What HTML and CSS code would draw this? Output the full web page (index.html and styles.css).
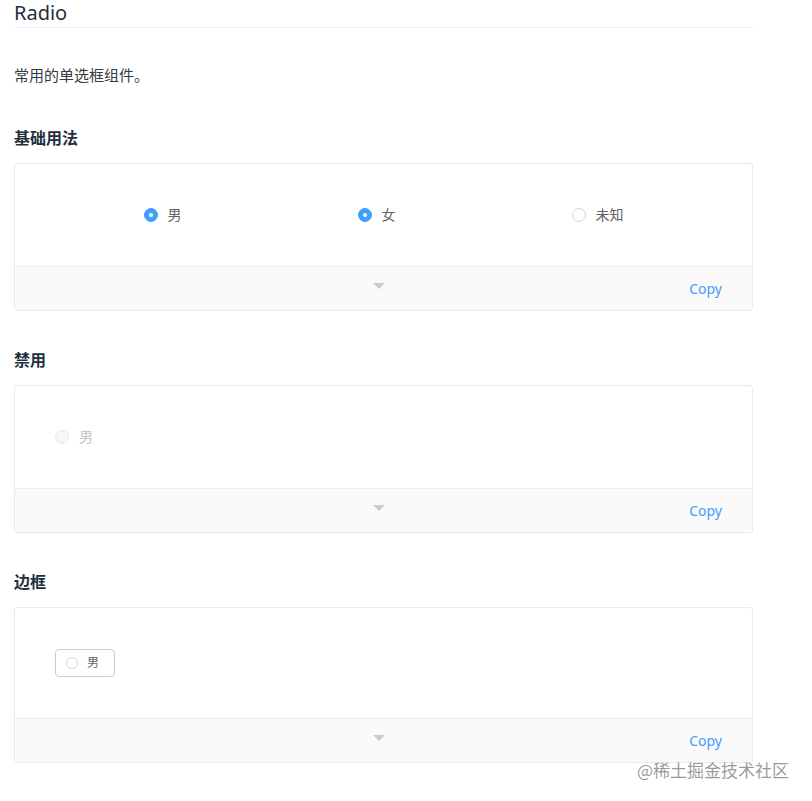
FILE: index.html
```html
<!DOCTYPE html>
<html lang="zh">
<head>
<meta charset="utf-8">
<title>Radio</title>
<link rel="stylesheet" href="styles.css">
</head>
<body>
<div class="page">
  <h2 class="title">Radio</h2>
  <p class="desc">常用的单选框组件。</p>

  <h3 class="section">基础用法</h3>
  <div class="demo">
    <div class="source source-spread">
      <label class="radio"><span class="dot checked"></span><span class="label">男</span></label>
      <label class="radio"><span class="dot checked"></span><span class="label">女</span></label>
      <label class="radio"><span class="dot"></span><span class="label">未知</span></label>
    </div>
    <div class="meta"><span class="arrow"></span><span class="copy">Copy</span></div>
  </div>

  <h3 class="section">禁用</h3>
  <div class="demo">
    <div class="source">
      <label class="radio disabled"><span class="dot"></span><span class="label">男</span></label>
    </div>
    <div class="meta"><span class="arrow"></span><span class="copy">Copy</span></div>
  </div>

  <h3 class="section">边框</h3>
  <div class="demo">
    <div class="source">
      <label class="radio bordered"><span class="dot small"></span><span class="label">男</span></label>
    </div>
    <div class="meta"><span class="arrow"></span><span class="copy">Copy</span></div>
  </div>
</div>
<div class="watermark">@稀土掘金技术社区</div>
</body>
</html>
```

FILE: styles.css
```css
html, body {
  margin: 0;
  padding: 0;
  background: #fff;
}
body {
  font-family: "Noto Sans", "Noto Sans CJK SC", sans-serif;
  color: #1f2f3d;
  position: relative;
  min-height: 801px;
}
.page {
  width: 739px;
  padding-left: 14px;
}
.title {
  margin: 0;
  font-size: 20px;
  font-weight: 400;
  line-height: 26px;
  height: 27px;
  border-bottom: 1px solid #eaeefb;
  color: #1f2f3d;
}
.desc {
  margin: 36px 0 0;
  font-size: 15px;
  line-height: 22px;
  color: #333a42;
}
.section {
  margin: 41px 0 14px;
  font-size: 16px;
  font-weight: 700;
  line-height: 22px;
  color: #1f2f3d;
}
.desc + .section {
  margin-top: 41px;
}
.demo + .section {
  margin-top: 38px;
}
.demo {
  border: 1px solid #ebebeb;
  border-radius: 3px;
}
.source {
  padding: 40px 40px;
  display: flex;
  align-items: center;
}
.source-spread {
  justify-content: center;
  gap: 176px;
  padding: 40px 0;
}
.radio {
  display: inline-flex;
  align-items: center;
  font-size: 14px;
  line-height: 22px;
  color: #606266;
  gap: 10px;
}
.dot {
  width: 14px;
  height: 14px;
  box-sizing: border-box;
  border-radius: 50%;
  border: 1px solid #cfd3da;
  background: #fff;
  position: relative;
}
.dot.checked {
  border-color: #409eff;
  background: #409eff;
}
.dot.checked::after {
  content: "";
  position: absolute;
  width: 4px;
  height: 4px;
  border-radius: 50%;
  background: #fff;
  left: 50%;
  top: 50%;
  transform: translate(-50%, -50%);
}
.radio.disabled {
  color: #c0c4cc;
}
.radio.disabled .dot {
  background: #f5f7fa;
  border-color: #e4e7ed;
}
.radio.bordered {
  height: 28px;
  box-sizing: border-box;
  border: 1px solid #c8cbd1;
  border-radius: 4px;
  padding: 0 15px 0 10px;
  font-size: 12px;
  gap: 9px;
  margin: 1px 0;
}
.dot.small {
  width: 12px;
  height: 12px;
}
.meta {
  height: 43px;
  border-top: 1px solid #eaeefb;
  background: #fafafa;
  display: flex;
  align-items: center;
  position: relative;
  padding-right: 30px;
  justify-content: flex-end;
}
.arrow {
  position: absolute;
  left: 358px;
  top: 16px;
  width: 0;
  height: 0;
  border-left: 6px solid transparent;
  border-right: 6px solid transparent;
  border-top: 6px solid #c8ccd2;
}
.copy {
  font-size: 14px;
  color: #409eff;
  margin-top: 0;
}
.watermark {
  position: absolute;
  left: 637px;
  top: 758px;
  font-size: 17px;
  line-height: 24px;
  color: rgba(120, 120, 120, 0.75);
  font-family: "Noto Sans CJK SC", sans-serif;
}
```
